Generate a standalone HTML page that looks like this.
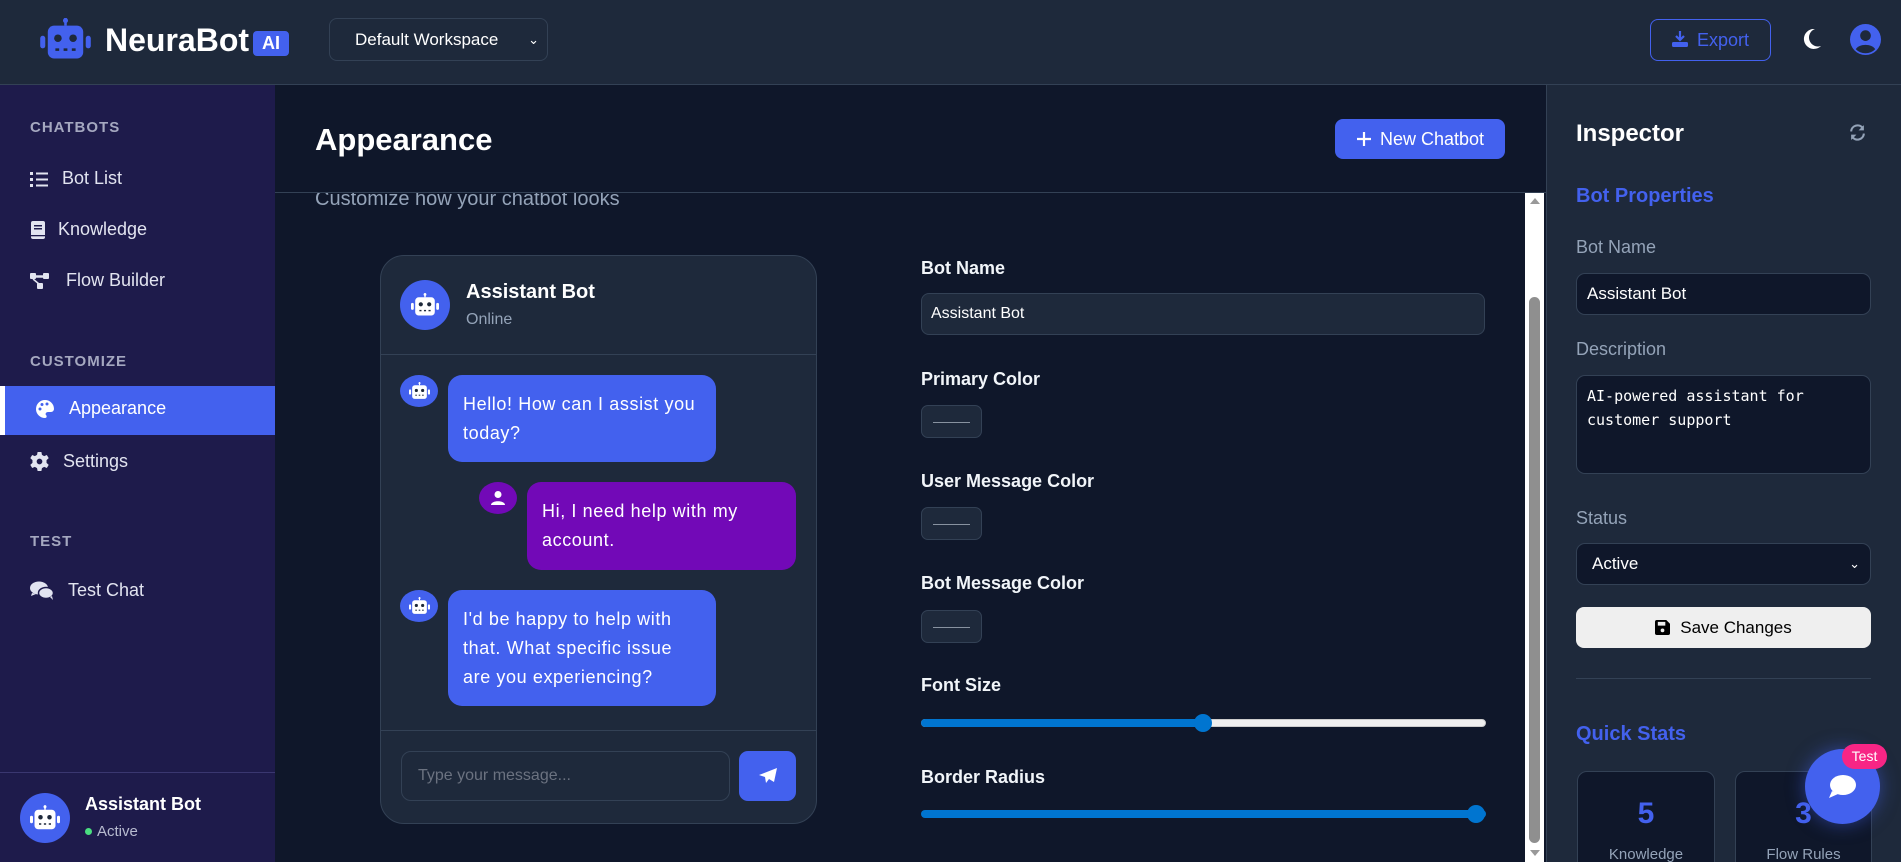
<!DOCTYPE html>
<html><head><meta charset="utf-8"><style>
*{box-sizing:border-box;margin:0;padding:0}
html{width:1901px;height:862px;overflow:hidden}
body{width:1901px;height:862px;overflow:hidden;background:#0f172a;font-family:"Liberation Sans",sans-serif;color:#fff;position:relative}
.abs{position:absolute}
.hdr{left:0;top:0;width:1901px;height:85px;background:#1e293b;border-bottom:1px solid #334155}
.side{left:0;top:85px;width:275px;height:777px;background:#1e1b4b}
.sec{position:absolute;left:30px;font-size:15px;font-weight:bold;color:#a5a8c0;letter-spacing:1px}
.item{position:absolute;left:30px;font-size:18px;color:#e2e4f0;display:flex;align-items:center;gap:14px}
.main{left:275px;top:85px;width:1271px;height:777px;background:#0f172a}
.right{left:1546px;top:85px;width:355px;height:777px;background:#1e293b;border-left:1px solid #334155;overflow:hidden}
.lbl{position:absolute;left:921px;font-size:18px;font-weight:bold;color:#f1f5f9}
.sw{position:absolute;left:921px;width:61px;height:33px;border:1px solid #334155;background:#1e293b;border-radius:7px}
.sw:after{content:"";position:absolute;left:11px;right:11px;top:16px;height:1px;background:#8892a0}
.bub{position:absolute;border-radius:14px;font-size:18px;line-height:29px;padding:0 12px 0 15px;display:flex;align-items:center;color:#fff;letter-spacing:0.6px}
.av{position:absolute;border-radius:50%;background:#4361ee;display:flex;align-items:center;justify-content:center}
.rl{position:absolute;left:1576px;font-size:18px;color:#94a3b8}
.rin{position:absolute;left:1576px;width:295px;background:#0f172a;border:1px solid #334155;border-radius:9px;color:#fff}
</style></head><body>
<svg width="0" height="0" style="position:absolute"><defs>
<symbol id="bot" viewBox="0 0 40 34"><rect x="19" y="0" width="2" height="6" fill="currentColor"/><circle cx="20" cy="2" r="2" fill="currentColor"/><rect x="6" y="6" width="28" height="26" rx="5" fill="currentColor"/><rect x="0" y="14" width="4" height="10" rx="2" fill="currentColor"/><rect x="36" y="14" width="4" height="10" rx="2" fill="currentColor"/><circle cx="14" cy="16" r="3" fill="#1e293b"/><circle cx="26" cy="16" r="3" fill="#1e293b"/><rect x="12" y="24" width="3" height="2" fill="#1e293b"/><rect x="18.5" y="24" width="3" height="2" fill="#1e293b"/><rect x="25" y="24" width="3" height="2" fill="#1e293b"/></symbol>
</defs></svg>

<div class="abs hdr">
  <svg class="abs" style="left:40px;top:18px;color:#4361ee" width="51" height="43"><use href="#bot"/></svg>
  <div class="abs" style="left:105px;top:22px;font-size:32px;font-weight:bold">NeuraBot</div>
  <div class="abs" style="left:253px;top:31px;width:36px;height:25px;background:#4361ee;border-radius:4px;font-size:18px;font-weight:bold;text-align:center;line-height:25px">AI</div>
  <div class="abs" style="left:329px;top:18px;width:219px;height:43px;border:1px solid #334155;border-radius:8px;background:#1e293b;font-size:17px;line-height:41px;padding-left:25px">Default Workspace<span style="position:absolute;right:8px;top:0;font-size:13px">&#8964;</span></div>
  <div class="abs" style="left:1650px;top:19px;width:121px;height:42px;border:1px solid #4361ee;border-radius:8px;color:#4361ee;font-size:18px;line-height:40px;padding-left:20px">
    <svg width="18" height="18" viewBox="0 0 18 18" style="vertical-align:-2px;margin-right:8px"><path d="M9 1v9M5 6l4 4 4-4" stroke="#4361ee" stroke-width="2.2" fill="none"/><rect x="1" y="12" width="16" height="5" rx="1.5" fill="#4361ee"/></svg>Export</div>
  <svg class="abs" style="left:1801px;top:27px" width="22" height="24" viewBox="0 0 22 24"><path d="M14 2A10 10 0 1 0 20 19 8 8 0 0 1 14 2z" fill="#fff"/></svg>
  <svg class="abs" style="left:1850px;top:24px" width="31" height="31" viewBox="0 0 32 32"><circle cx="16" cy="16" r="16" fill="#4361ee"/><circle cx="16" cy="12" r="5.5" fill="#1e293b"/><path d="M6 26c3-6 17-6 20 0a14 14 0 0 1-20 0z" fill="#1e293b"/></svg>
</div>

<div class="abs side">
  <div class="sec" style="top:34px">CHATBOTS</div>
  <div class="item" style="top:83px"><svg width="18" height="16"><g fill="#e2e4f0"><rect y="1" width="3" height="3"/><rect y="7" width="3" height="3"/><rect y="13" width="3" height="3"/><rect x="6" y="1.5" width="12" height="2"/><rect x="6" y="7.5" width="12" height="2"/><rect x="6" y="13.5" width="12" height="2"/></g></svg>Bot List</div>
  <div class="item" style="top:134px;gap:12px"><svg width="16" height="18"><rect x="1" y="0" width="14" height="18" rx="2" fill="#e2e4f0"/><rect x="4" y="4" width="8" height="1.5" fill="#1e1b4b"/><rect x="4" y="7" width="8" height="1.5" fill="#1e1b4b"/><rect x="1" y="14" width="14" height="1.3" fill="#1e1b4b"/></svg>Knowledge</div>
  <div class="item" style="top:185px;gap:16px"><svg width="20" height="18"><g fill="#e2e4f0"><rect x="0" y="1" width="6" height="6" rx="1"/><rect x="13" y="1" width="6" height="6" rx="1"/><rect x="7" y="11" width="6" height="6" rx="1"/><path d="M6 4h7v1H6zM3 7l6 5" stroke="#e2e4f0" stroke-width="1.5"/></g></svg>Flow Builder</div>
  <div class="sec" style="top:268px">CUSTOMIZE</div>
  <div class="abs" style="left:0;top:301px;width:275px;height:49px;background:#4361ee"></div>
  <div class="abs" style="left:0;top:301px;width:5px;height:49px;background:#fff"></div>
  <div class="item" style="top:313px;left:35px;color:#fff"><svg width="20" height="20" viewBox="0 0 20 20"><path d="M10 1a9 9 0 0 0 0 18c2 0 2-2 1-3s0-3 2-3h3a3 3 0 0 0 3-3 9 9 0 0 0-9-9z" fill="#fff"/><circle cx="5" cy="10" r="1.5" fill="#4361ee"/><circle cx="7" cy="5.5" r="1.5" fill="#4361ee"/><circle cx="12" cy="5" r="1.5" fill="#4361ee"/></svg>Appearance</div>
  <div class="item" style="top:366px"><svg width="19" height="19" viewBox="0 0 20 20"><path d="M8 0h4l.6 3 2.3 1.3 2.8-1.2 2 3.4-2.3 2v3l2.3 2-2 3.4-2.8-1.2-2.3 1.3L12 20H8l-.6-3-2.3-1.3-2.8 1.2-2-3.4 2.3-2v-3l-2.3-2 2-3.4 2.8 1.2L7.4 3z" fill="#e2e4f0"/><circle cx="10" cy="10" r="3" fill="#1e1b4b"/></svg>Settings</div>
  <div class="sec" style="top:448px">TEST</div>
  <div class="item" style="top:495px"><svg width="24" height="20" viewBox="0 0 24 20"><ellipse cx="9" cy="7" rx="9" ry="6.5" fill="#e2e4f0"/><path d="M2 12l-1 3 5-2z" fill="#e2e4f0"/><ellipse cx="16" cy="12" rx="7.5" ry="5.5" fill="#e2e4f0" stroke="#1e1b4b" stroke-width="1.5"/><path d="M20 16l3 3-1-4z" fill="#e2e4f0"/></svg>Test Chat</div>
  <div class="abs" style="left:0;top:687px;width:275px;height:1px;background:#3a3770"></div>
  <div class="av" style="left:20px;top:708px;width:50px;height:50px"><svg width="30" height="26" style="color:#fff"><use href="#bot"/></svg></div>
  <div class="abs" style="left:85px;top:709px;font-size:18px;font-weight:bold">Assistant Bot</div>
  <div class="abs" style="left:85px;top:738px;font-size:15px;color:#b8bcd0"><span style="display:inline-block;width:7px;height:7px;border-radius:50%;background:#4ade80;margin-right:5px;vertical-align:1px"></span>Active</div>
</div>

<div class="abs main">
  <div class="abs" style="left:40px;top:37px;font-size:31px;font-weight:bold">Appearance</div>
  <div class="abs" style="left:1060px;top:34px;width:170px;height:40px;background:#4361ee;border-radius:8px;font-size:18px;line-height:40px;text-align:center">
    <svg width="16" height="16" style="vertical-align:-2px;margin-right:8px"><path d="M8 1v14M1 8h14" stroke="#fff" stroke-width="2.2"/></svg>New Chatbot</div>
  <div class="abs" style="left:40px;top:108px;width:1200px;height:18px;overflow:hidden"><div style="margin-top:-5px;font-size:20px;color:#94a3b8">Customize how your chatbot looks</div></div>
  <div class="abs" style="left:0;top:107px;width:1271px;height:1px;background:#334155"></div>
  <div class="abs" style="left:1250px;top:108px;width:19px;height:669px;background:#fff"></div>
  <div class="abs" style="left:1255px;top:113px;width:0;height:0;border-left:5px solid transparent;border-right:5px solid transparent;border-bottom:6px solid #999"></div>
  <div class="abs" style="left:1254px;top:212px;width:11px;height:546px;background:#8f8f8f;border-radius:6px"></div>
  <div class="abs" style="left:1255px;top:765px;width:0;height:0;border-left:5px solid transparent;border-right:5px solid transparent;border-top:6px solid #999"></div>
</div>

<!-- chat preview -->
<div class="abs" style="left:380px;top:255px;width:437px;height:569px;background:#1e293b;border:1px solid #334155;border-radius:24px;overflow:hidden">
  <div class="av" style="left:19px;top:24px;width:50px;height:50px"><svg width="28" height="24" style="color:#fff"><use href="#bot"/></svg></div>
  <div class="abs" style="left:85px;top:25px;font-size:20px;font-weight:bold">Assistant Bot</div>
  <div class="abs" style="left:85px;top:55px;font-size:16px;color:#94a3b8">Online</div>
  <div class="abs" style="left:0;top:98px;width:437px;height:1px;background:#334155"></div>
  <div class="av" style="left:19px;top:119px;width:38px;height:32px;border-radius:50%"><svg width="21" height="18" style="color:#fff"><use href="#bot"/></svg></div>
  <div class="bub" style="left:67px;top:119px;width:268px;height:87px;background:#4361ee">Hello! How can I assist you today?</div>
  <div class="av" style="left:98px;top:226px;width:38px;height:32px;background:#7209b7"><svg width="16" height="16" viewBox="0 0 16 16"><circle cx="8" cy="4.5" r="3.5" fill="#fff"/><path d="M1 15c0-5 14-5 14 0z" fill="#fff"/></svg></div>
  <div class="bub" style="left:146px;top:226px;width:269px;height:88px;background:#7209b7">Hi, I need help with my account.</div>
  <div class="av" style="left:19px;top:334px;width:38px;height:32px"><svg width="21" height="18" style="color:#fff"><use href="#bot"/></svg></div>
  <div class="bub" style="left:67px;top:334px;width:268px;height:116px;background:#4361ee">I'd be happy to help with that. What specific issue are you experiencing?</div>
  <div class="abs" style="left:0;top:474px;width:437px;height:1px;background:#334155"></div>
  <div class="abs" style="left:20px;top:495px;width:329px;height:50px;border:1px solid #334155;border-radius:10px;font-size:16px;color:#6b7280;line-height:48px;padding-left:16px">Type your message...</div>
  <div class="abs" style="left:358px;top:495px;width:57px;height:50px;background:#4361ee;border-radius:9px"><svg width="20" height="18" viewBox="0 0 20 18" style="position:absolute;left:19px;top:16px"><path d="M19 1L1 8l6 2 1 6 3-4 5 3z" fill="#fff"/></svg></div>
</div>

<!-- form -->
<div class="lbl" style="top:258px">Bot Name</div>
<div class="abs" style="left:921px;top:293px;width:564px;height:42px;background:#1e293b;border:1px solid #334155;border-radius:8px;font-size:16px;line-height:40px;padding-left:9px">Assistant Bot</div>
<div class="lbl" style="top:369px">Primary Color</div><div class="sw" style="top:405px"></div>
<div class="lbl" style="top:471px">User Message Color</div><div class="sw" style="top:507px"></div>
<div class="lbl" style="top:573px">Bot Message Color</div><div class="sw" style="top:610px"></div>
<div class="lbl" style="top:675px">Font Size</div>
<div class="abs" style="left:921px;top:719px;width:565px;height:8px;background:#efefef;border-radius:4px;border:1px solid #ccc"></div>
<div class="abs" style="left:921px;top:719px;width:282px;height:8px;background:#0075d0;border-radius:4px"></div>
<div class="abs" style="left:1194px;top:714px;width:18px;height:18px;background:#0075d0;border-radius:50%"></div>
<div class="lbl" style="top:767px">Border Radius</div>
<div class="abs" style="left:921px;top:810px;width:565px;height:8px;background:#0075d0;border-radius:4px"></div>
<div class="abs" style="left:1467px;top:805px;width:18px;height:18px;background:#0075d0;border-radius:50%"></div>

<!-- right -->
<div class="abs right">
  <div class="abs" style="left:30px;top:686px;width:138px;height:120px;background:#0f172a;border:1px solid #334155;border-radius:10px"></div>
  <div class="abs" style="left:188px;top:686px;width:137px;height:120px;background:#0f172a;border:1px solid #334155;border-radius:10px"></div>
  <div class="abs" style="left:30px;top:712px;width:138px;text-align:center;font-size:30px;font-weight:bold;color:#4361ee">5</div>
  <div class="abs" style="left:188px;top:712px;width:137px;text-align:center;font-size:30px;font-weight:bold;color:#4361ee">3</div>
  <div class="abs" style="left:30px;top:761px;width:138px;text-align:center;font-size:15px;color:#94a3b8">Knowledge</div>
  <div class="abs" style="left:188px;top:761px;width:137px;text-align:center;font-size:15px;color:#94a3b8">Flow Rules</div>
</div>
<div class="abs" style="left:1576px;top:120px;font-size:24px;font-weight:bold">Inspector</div>
<svg class="abs" style="left:1849px;top:124px" width="17" height="17" viewBox="0 0 16 16"><path d="M2 7a6 6 0 0 1 11-3M14 9a6 6 0 0 1-11 3" stroke="#94a3b8" stroke-width="2" fill="none"/><path d="M14 1v5h-5zM2 15v-5h5z" fill="#94a3b8"/></svg>
<div class="abs" style="left:1576px;top:185px;font-size:20px;font-weight:bold;color:#4361ee">Bot Properties</div>
<div class="rl" style="top:237px">Bot Name</div>
<div class="rin" style="top:273px;height:42px;font-size:17px;line-height:40px;padding-left:10px">Assistant Bot</div>
<div class="rl" style="top:339px">Description</div>
<div class="rin" style="top:375px;height:99px;font-family:'DejaVu Sans Mono','Liberation Mono',monospace;font-size:15px;line-height:24px;padding:8px 10px">AI-powered assistant for customer support</div>
<div class="rl" style="top:508px">Status</div>
<div class="rin" style="top:543px;height:42px;font-size:17px;line-height:40px;padding-left:15px">Active<span style="position:absolute;right:10px;font-size:13px">&#8964;</span></div>
<div class="abs" style="left:1576px;top:607px;width:295px;height:41px;background:#efefef;border-radius:8px;color:#000;font-size:17px;line-height:41px;text-align:center"><svg width="15" height="15" viewBox="0 0 16 16" style="vertical-align:-2px;margin-right:10px"><path d="M0 2a2 2 0 0 1 2-2h10l4 4v10a2 2 0 0 1-2 2H2a2 2 0 0 1-2-2z" fill="#000"/><rect x="3" y="2" width="8" height="4" fill="#efefef"/><circle cx="8" cy="11" r="2" fill="#efefef"/></svg>Save Changes</div>
<div class="abs" style="left:1576px;top:678px;width:295px;height:1px;background:#334155"></div>
<div class="abs" style="left:1576px;top:723px;font-size:20px;font-weight:bold;color:#4361ee">Quick Stats</div>
<div class="abs" style="left:1805px;top:749px;width:75px;height:75px;border-radius:50%;background:#4361ee;box-shadow:0 0 18px rgba(67,97,238,.5)"><svg width="30" height="26" viewBox="0 0 30 26" style="position:absolute;left:22px;top:25px"><ellipse cx="16" cy="11" rx="13" ry="10" fill="#fff"/><path d="M5 17l-3 7 9-4z" fill="#fff"/></svg></div>
<div class="abs" style="left:1842px;top:744px;width:45px;height:25px;background:#f72585;border-radius:13px;font-size:14px;line-height:25px;text-align:center">Test</div>
</body></html>
